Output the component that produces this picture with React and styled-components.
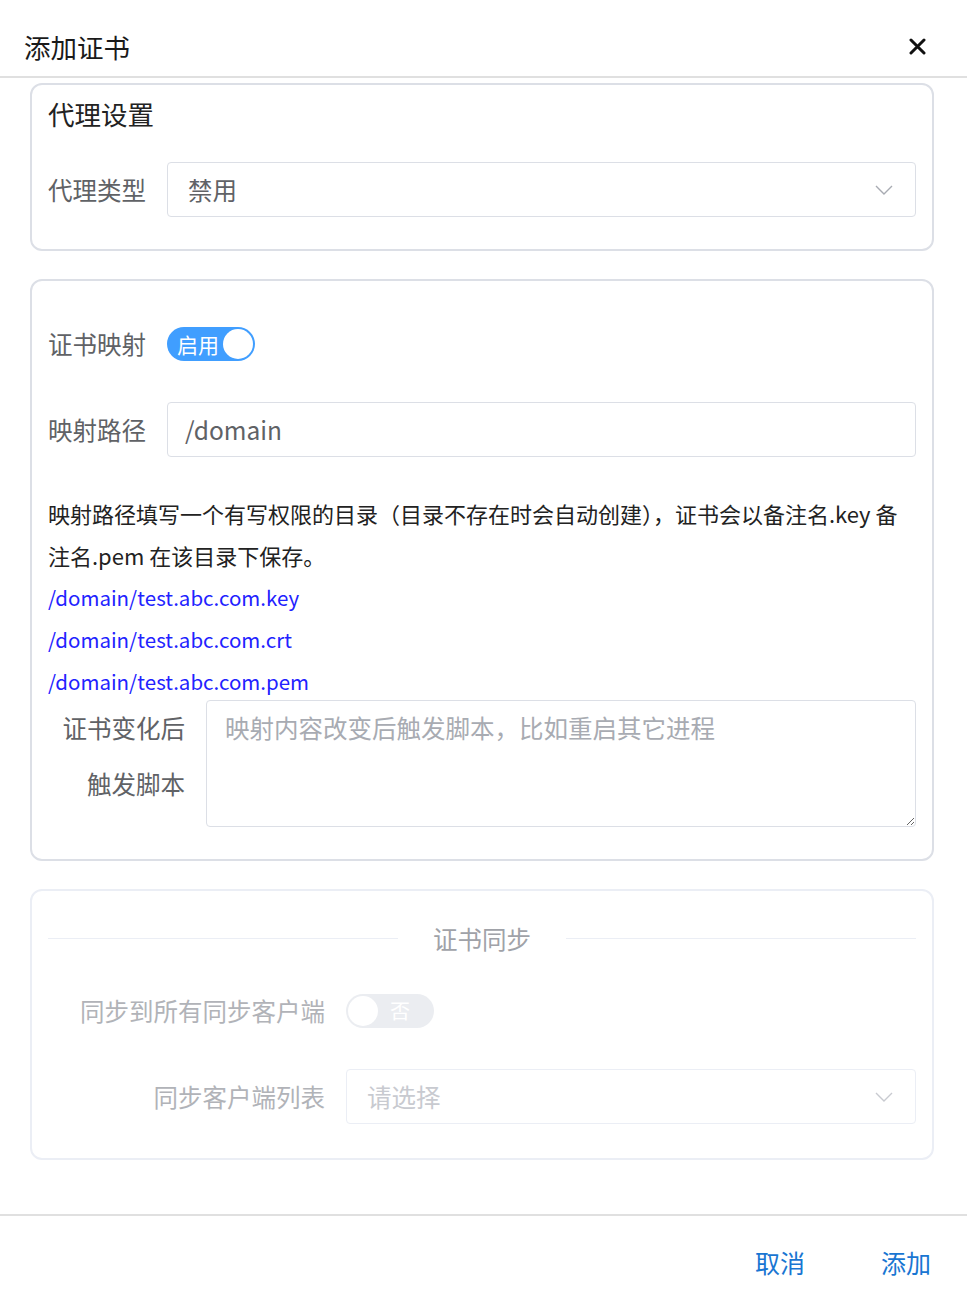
import React from "react";
import styled, { createGlobalStyle } from "styled-components";

const GlobalStyle = createGlobalStyle`
  html, body {
    margin: 0;
    padding: 0;
    background: #fff;
  }
  body {
    font-family: "Noto Sans CJK SC", "Noto Sans", sans-serif;
    color: #303133;
  }
  * {
    box-sizing: border-box;
  }
`;

const Dialog = styled.div`
  display: flex;
  flex-direction: column;
  height: 100vh;
  min-height: 1300px;
`;

const Header = styled.div`
  display: flex;
  align-items: center;
  justify-content: space-between;
  height: 78px;
  padding: 17px 40px 0 24px;
  border-bottom: 2px solid #e0e0e0;
`;

const Title = styled.div`
  font-size: 26.5px;
  line-height: 58px;
  color: #1a1a1a;
`;

const CloseButton = styled.button`
  display: flex;
  align-items: center;
  justify-content: center;
  width: 20px;
  height: 20px;
  padding: 0;
  border: none;
  background: none;
  cursor: pointer;
`;

const Body = styled.div`
  flex: 1;
  padding: 5px 33px 0 30px;
`;

const Card = styled.div`
  border: 2px solid ${(p) => (p.$disabled ? "#ebeef5" : "#dcdfe6")};
  border-radius: 12px;
  padding: ${(p) => p.$pad};
  margin-bottom: 28px;
`;

const CardTitle = styled.div`
  font-size: 26.5px;
  line-height: 34px;
  color: #222;
  margin-bottom: 31px;
`;

const FormItem = styled.div`
  display: flex;
  align-items: ${(p) => (p.$top ? "flex-start" : "center")};
  min-height: 55px;
  margin-top: ${(p) => p.$mt || 0}px;
  margin-bottom: ${(p) => p.$mb || 0}px;
`;

const Label = styled.div`
  flex: none;
  width: ${(p) => p.$width}px;
  padding-right: ${(p) => (p.$right ? 21 : 0)}px;
  text-align: ${(p) => (p.$right ? "right" : "left")};
  font-size: 24.5px;
  line-height: ${(p) => p.$lh || 34}px;
  color: ${(p) => (p.$disabled ? "#b1b3b8" : "#606266")};
`;

const Field = styled.div`
  flex: 1;
  display: flex;
  align-items: center;
  justify-content: space-between;
  height: 55px;
  padding: 0 22px 0 20px;
  border: 1px solid ${(p) => (p.$disabled ? "#ebeef5" : "#dcdfe6")};
  border-radius: 4px;
  background: #fff;
  font-size: 24.5px;
  color: ${(p) => (p.$placeholder ? "#c8cad0" : "#606266")};
`;

const InputText = styled.span`
  margin-left: ${(p) => p.$shift || 0}px;
`;

const Switch = styled.div`
  position: relative;
  display: flex;
  align-items: center;
  width: 88px;
  height: 34px;
  border-radius: 17px;
  background: ${(p) => (p.$on ? "#409eff" : "#ebedf1")};
  padding: ${(p) => (p.$on ? "0 0 0 10px" : "0 0 0 44px")};
  color: #fff;
  font-size: ${(p) => (p.$on ? 21 : 20)}px;
`;

const Knob = styled.span`
  position: absolute;
  top: 2px;
  ${(p) => (p.$on ? "right: 2px;" : "left: 2px;")}
  width: 30px;
  height: 30px;
  border-radius: 50%;
  background: #fff;
`;

const Hint = styled.div`
  margin-top: 35px;
  font-size: 22px;
  line-height: 42px;
  color: #222;
`;

const PathLine = styled.div`
  font-size: 20.5px;
  color: #2222ff;
`;

const Textarea = styled.textarea`
  flex: 1;
  height: 127px;
  padding: 12px 18px;
  border: 1px solid #dcdfe6;
  border-radius: 4px;
  font-family: inherit;
  font-size: 24.5px;
  line-height: 30px;
  color: #606266;
  resize: vertical;
  outline: none;

  &::placeholder {
    color: #a8abb2;
  }
`;

const Divider = styled.div`
  display: flex;
  align-items: center;
  gap: 35px;
  height: 34px;
  margin-bottom: 28px;
  font-size: 24.5px;
  color: #a0a2a8;

  &::before,
  &::after {
    content: "";
    flex: 1;
    border-top: 1px solid #ebeef5;
  }
`;

const Footer = styled.div`
  display: flex;
  justify-content: flex-end;
  gap: 76px;
  height: 86px;
  padding: 29px 36px 0 0;
  border-top: 2px solid #e0e0e0;
`;

const TextButton = styled.button`
  padding: 0;
  border: none;
  background: none;
  font-family: inherit;
  font-size: 25px;
  line-height: 34px;
  height: 34px;
  color: #1976d2;
  cursor: pointer;
`;

function Chevron({ light }) {
  return (
    <svg width="18" height="10" viewBox="0 0 18 10" fill="none">
      <polyline
        points="1,1 9,9 17,1"
        stroke={light ? "#c8cad0" : "#a8abb2"}
        strokeWidth="1.4"
      />
    </svg>
  );
}

export default function App() {
  return (
    <>
      <GlobalStyle />
      <Dialog>
        <Header>
          <Title>添加证书</Title>
          <CloseButton aria-label="close">
            <svg width="17" height="17" viewBox="0 0 17 17">
              <path d="M2 2L15 15M15 2L2 15" stroke="#111" strokeWidth="3" strokeLinecap="round" />
            </svg>
          </CloseButton>
        </Header>

        <Body>
          <Card $pad="12px 16px 32px">
            <CardTitle>代理设置</CardTitle>
            <FormItem>
              <Label $width={119}>代理类型</Label>
              <Field>
                禁用
                <Chevron />
              </Field>
            </FormItem>
          </Card>

          <Card $pad="35px 16px 32px">
            <FormItem $mb={31}>
              <Label $width={119}>证书映射</Label>
              <Switch $on>
                启用
                <Knob $on />
              </Switch>
            </FormItem>
            <FormItem>
              <Label $width={119}>映射路径</Label>
              <Field>
                <InputText $shift={-3}>/domain</InputText>
              </Field>
            </FormItem>
            <Hint>
              映射路径填写一个有写权限的目录（目录不存在时会自动创建），证书会以备注名.key 备注名.pem 在该目录下保存。
              <PathLine>/domain/test.abc.com.key</PathLine>
              <PathLine>/domain/test.abc.com.crt</PathLine>
              <PathLine>/domain/test.abc.com.pem</PathLine>
            </Hint>
            <FormItem $top $mt={-2}>
              <Label $width={158} $right $lh={56}>证书变化后触发脚本</Label>
              <Textarea placeholder="映射内容改变后触发脚本，比如重启其它进程" />
            </FormItem>
          </Card>

          <Card $disabled $pad="30px 16px 34px">
            <Divider>证书同步</Divider>
            <FormItem $mb={31}>
              <Label $width={298} $right $disabled>同步到所有同步客户端</Label>
              <Switch>
                否
                <Knob />
              </Switch>
            </FormItem>
            <FormItem>
              <Label $width={298} $right $disabled>同步客户端列表</Label>
              <Field $disabled $placeholder>
                请选择
                <Chevron light />
              </Field>
            </FormItem>
          </Card>
        </Body>

        <Footer>
          <TextButton>取消</TextButton>
          <TextButton>添加</TextButton>
        </Footer>
      </Dialog>
    </>
  );
}
